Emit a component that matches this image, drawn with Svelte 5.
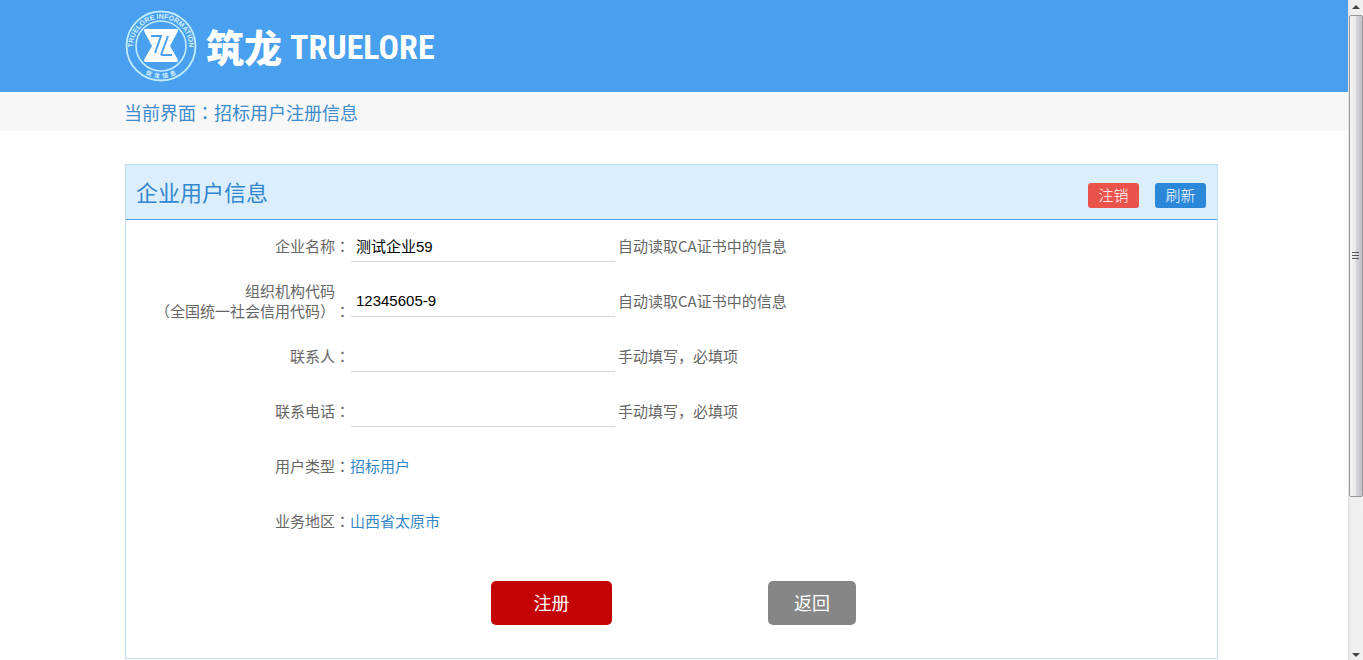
<script>
	let company = $state("测试企业59");
	let orgCode = $state("12345605-9");
	let contact = $state("");
	let phone = $state("");
</script>

{#snippet colon()}<span class="colon">：</span>{/snippet}

<div class="window">
	<div class="page">
		<header class="banner">
			<a class="brand" href="#home" aria-label="筑龙 TRUELORE">
				<svg class="seal" width="72" height="72" viewBox="0 0 72 72" fill="none" aria-hidden="true">
					<defs>
						<path id="arc-top" d="M8.5 42A28 28 0 1 1 63.5 42" />
						<path id="arc-bottom" d="M8 52A32.5 32.5 0 0 0 64 52" />
					</defs>
					<circle cx="36" cy="36" r="34.5" stroke="#c3ebff" stroke-width="1.8" />
					<circle cx="36" cy="36" r="25" stroke="#c3ebff" stroke-width="1.6" />
					<text class="seal-en">
						<textPath href="#arc-top" startOffset="50%" text-anchor="middle">TRUELORE INFORMATION</textPath>
					</text>
					<text class="seal-cn">
						<textPath href="#arc-bottom" startOffset="50%" text-anchor="middle">筑&#160; 龙&#160; 信&#160; 息</textPath>
					</text>
					<path
						d="M21 19H51Q54 19 52.500 22L45 36L52.500 49Q54 52 51 52H21Q18 52 19.500 49L27 36L19.500 22Q18 19 21 19Z"
						fill="#fff"
					/>
					<path d="M26 26H36L30 43M36 45H47M43 26L36 45" stroke="#48a0ee" stroke-width="2" />
				</svg>
				<span class="brand-cn">筑龙</span>
				<span class="brand-en">TRUELORE</span>
			</a>
		</header>

		<nav class="crumb" aria-label="当前界面">当前界面{@render colon()}招标用户注册信息</nav>

		<main class="content">
			<section class="panel">
				<div class="panel-header">
					<h1>企业用户信息</h1>
					<div class="tools">
						<button type="button" class="tool tool--logout">注销</button>
						<button type="button" class="tool tool--refresh">刷新</button>
					</div>
				</div>

				<form onsubmit={(e) => e.preventDefault()}>
					<div class="row">
						<label for="company">企业名称{@render colon()}</label>
						<input id="company" type="text" bind:value={company} />
						<span class="hint">自动读取CA证书中的信息</span>
					</div>
					<div class="row">
						<label for="org-code">
							<span class="label-top">组织机构代码</span>
							（全国统一社会信用代码）{@render colon()}
						</label>
						<input id="org-code" type="text" bind:value={orgCode} />
						<span class="hint">自动读取CA证书中的信息</span>
					</div>
					<div class="row">
						<label for="contact">联系人{@render colon()}</label>
						<input id="contact" type="text" bind:value={contact} />
						<span class="hint">手动填写，必填项</span>
					</div>
					<div class="row">
						<label for="phone">联系电话{@render colon()}</label>
						<input id="phone" type="text" bind:value={phone} />
						<span class="hint">手动填写，必填项</span>
					</div>
					<div class="row">
						<span class="name">用户类型{@render colon()}</span>
						<span class="value">招标用户</span>
					</div>
					<div class="row">
						<span class="name">业务地区{@render colon()}</span>
						<span class="value">山西省太原市</span>
					</div>

					<div class="actions">
						<button type="submit" class="action action--register">注册</button>
						<button type="button" class="action action--back">返回</button>
					</div>
				</form>
			</section>
		</main>
	</div>

	<div class="scrollbar" aria-hidden="true">
		<svg width="15" height="15" viewBox="0 0 15 15"><path d="M4 9L8 5L12 9Z" fill="#444" /></svg>
		<div class="thumb">
			<svg width="8" height="8" viewBox="0 0 8 8"><path d="M0 .5H7M0 3.500H7M0 6.500H7" stroke="#555" /></svg>
		</div>
		<svg class="down" width="15" height="15" viewBox="0 0 15 15"><path d="M4 8L8 12L12 8Z" fill="#444" /></svg>
	</div>
</div>

<style>
	:global(body) {
		background: #fff;
	}

	.window {
		display: grid;
		grid-template-columns: 1fr 15px;
		height: 100vh;
		overflow: hidden;
		color: #666;
		font-family: "Noto Sans CJK SC", sans-serif;
		font-size: 15px;
		font-weight: 400;
		line-height: 20px;
		text-spacing-trim: space-all;
	}

	.page {
		min-width: 0;
		overflow: hidden;
	}

	.colon {
		font-family: "Noto Sans CJK TC", sans-serif;
	}

	.banner {
		display: flex;
		align-items: center;
		height: 92px;
		padding: 0 130px 0 125px;
		background: #48a0ee;
	}

	.brand {
		display: flex;
		align-items: center;
		color: #fff;
		line-height: 48px;
		text-decoration: none;
		white-space: nowrap;
	}

	.seal {
		margin-right: 9px;
	}

	.seal-en {
		fill: #d5f1ff;
		font-family: "Liberation Sans", sans-serif;
		font-size: 7px;
		font-weight: 700;
	}

	.seal-cn {
		fill: #d5f1ff;
		font-size: 6px;
		font-weight: 700;
	}

	.brand-cn {
		margin-right: 8px;
		font-size: 38px;
		font-weight: 900;
	}

	.brand-en {
		padding-top: 2px;
		font-family: "Liberation Sans Narrow", "Roboto Condensed", sans-serif;
		font-size: 34px;
		font-weight: 700;
	}

	.crumb {
		margin-top: 2px;
		padding: 0 124px;
		background: #f7f7f7;
		color: #3c8bcd;
		font-size: 18px;
		line-height: 37px;
	}

	.content {
		padding: 33px 130px 0 125px;
	}

	.panel {
		border: 1px solid #bfdff0;
	}

	.panel-header {
		display: flex;
		align-items: center;
		justify-content: space-between;
		height: 54px;
		padding: 0 11px 0 10px;
		border-bottom: 1px solid #4ba3dc;
		background: #dbeefd;
	}

	h1 {
		margin: 0;
		color: #3287ce;
		font-size: 22px;
		font-weight: 400;
		line-height: 52px;
		padding-bottom: 2px;
	}

	.tools {
		display: flex;
		gap: 16px;
		padding-top: 6px;
	}

	button {
		padding: 0;
		border: none;
		color: #fff;
		font-family: inherit;
		font-weight: inherit;
		cursor: pointer;
	}

	.tool {
		width: 51px;
		height: 25px;
		padding-bottom: 2px;
		border-radius: 3px;
		font-size: 15px;
		font-weight: 300;
		line-height: 23px;
	}

	.tool--logout {
		background: #ea524c;
	}

	.tool--refresh {
		background: #2b88d9;
	}

	.row {
		display: grid;
		grid-template-columns: 224px 264px 1fr;
		align-items: center;
		height: 55px;
	}

	label,
	.name {
		padding-bottom: 3px;
		text-align: right;
		white-space: nowrap;
	}

	.label-top {
		display: block;
		padding-right: 15px;
	}

	input {
		box-sizing: border-box;
		width: 264px;
		height: 29px;
		margin-left: 1px;
		padding: 0 5px 4px;
		border: none;
		border-bottom: 1px solid #d6d6d6;
		outline: none;
		background: none;
		color: #000;
		font-family: "Liberation Sans", "Noto Sans CJK SC", sans-serif;
		font-size: 15px;
	}

	.hint {
		padding: 0 0 4px 4px;
	}

	.value {
		padding-bottom: 3px;
		color: #3287c8;
	}

	.actions {
		display: flex;
		justify-content: center;
		gap: 156px;
		padding: 31px 0 33px 4px;
	}

	.action {
		height: 44px;
		padding-bottom: 2px;
		border-radius: 5px;
		font-size: 18px;
	}

	.action--register {
		width: 121px;
		background: #c30304;
	}

	.action--back {
		width: 88px;
		background: #868686;
	}

	.scrollbar {
		display: flex;
		flex-direction: column;
		background: linear-gradient(to right, #e3e3e3, #eee 3px, #f0f0f0);
	}

	.thumb {
		display: flex;
		flex: 0 0 73%;
		align-items: center;
		justify-content: center;
		margin-left: 1px;
		border: 1px solid #979797;
		border-radius: 2px;
		box-sizing: border-box;
		background: linear-gradient(to right, #f5f5f5, #e9e9eb 45%, #d2d3d7 55%, #c2c3c8);
	}

	.down {
		margin-top: auto;
	}
</style>
